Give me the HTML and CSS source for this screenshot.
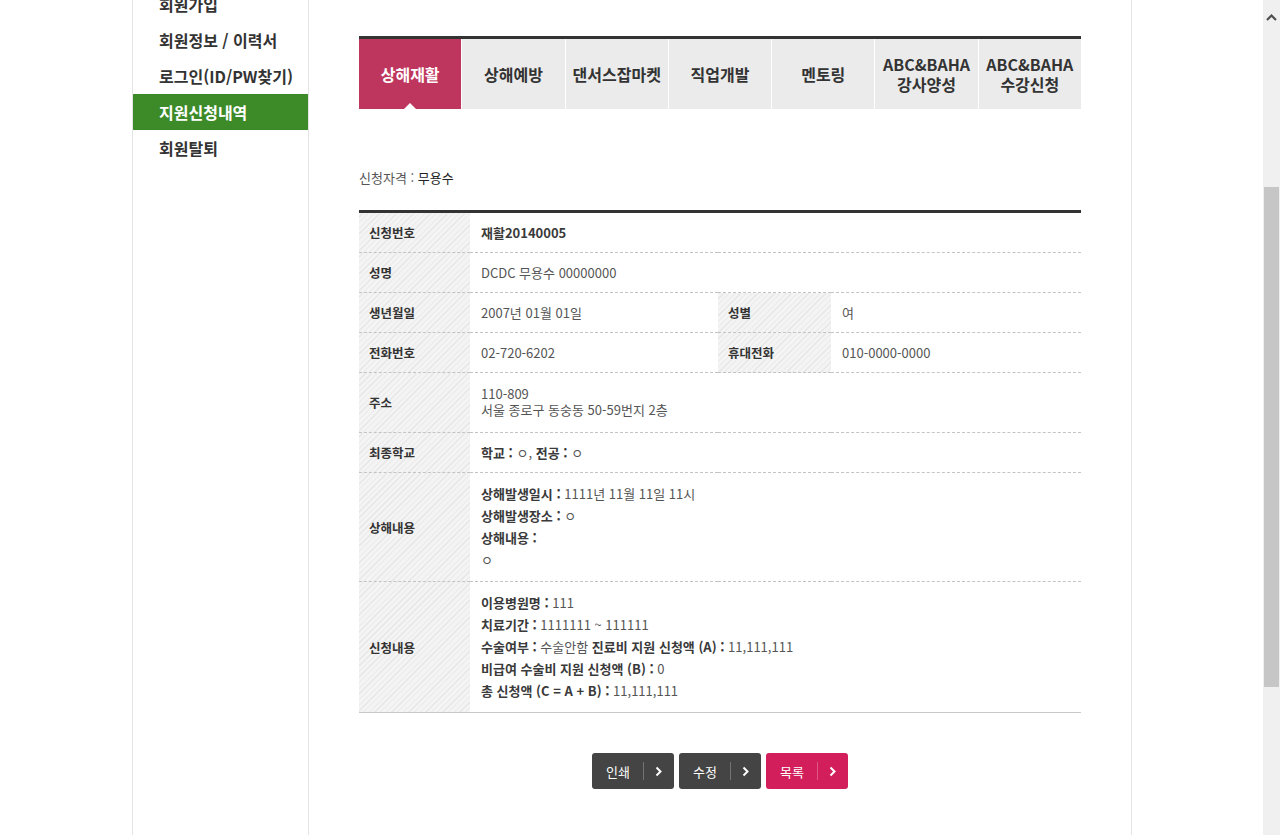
FILE: index.html
```html
<!DOCTYPE html>
<html lang="ko">
<head>
    <meta charset="UTF-8">
    <meta name="viewport" content="width=device-width, initial-scale=1.0">
    <title>마이페이지 - 지원신청내역</title>
    <link rel="stylesheet" href="styles.css">
</head>
<body>
<div class="viewport">
    <div class="page">
        <div class="wrap">
            <!-- Left menu -->
            <aside class="side">
                <ul class="side-menu">
                    <li><a href="#">회원가입</a></li>
                    <li><a href="#">회원정보 / 이력서</a></li>
                    <li><a href="#">로그인(ID/PW찾기)</a></li>
                    <li class="on"><a href="#">지원신청내역</a></li>
                    <li><a href="#">회원탈퇴</a></li>
                </ul>
            </aside>

            <main class="content">
                <!-- Program tabs -->
                <ul class="tabs">
                    <li class="on"><a href="#">상해재활</a></li>
                    <li><a href="#">상해예방</a></li>
                    <li><a href="#">댄서스잡마켓</a></li>
                    <li><a href="#">직업개발</a></li>
                    <li><a href="#">멘토링</a></li>
                    <li><a href="#">ABC&amp;BAHA<br>강사양성</a></li>
                    <li><a href="#">ABC&amp;BAHA<br>수강신청</a></li>
                </ul>

                <p class="qualify">신청자격 : <strong>무용수</strong></p>

                <!-- Application detail -->
                <table class="view-table">
                    <colgroup>
                        <col class="c-th">
                        <col class="c-td">
                        <col class="c-th2">
                        <col>
                    </colgroup>
                    <tr>
                        <th>신청번호</th>
                        <td colspan="3"><strong>재활20140005</strong></td>
                    </tr>
                    <tr>
                        <th>성명</th>
                        <td colspan="3">DCDC 무용수 00000000</td>
                    </tr>
                    <tr>
                        <th>생년월일</th>
                        <td>2007년 01월 01일</td>
                        <th>성별</th>
                        <td>여</td>
                    </tr>
                    <tr>
                        <th>전화번호</th>
                        <td>02-720-6202</td>
                        <th>휴대전화</th>
                        <td>010-0000-0000</td>
                    </tr>
                    <tr>
                        <th>주소</th>
                        <td colspan="3" class="addr">110-809<br>서울 종로구 동숭동 50-59번지 2층</td>
                    </tr>
                    <tr>
                        <th>최종학교</th>
                        <td colspan="3"><strong>학교 :</strong> ㅇ, <strong>전공 :</strong> ㅇ</td>
                    </tr>
                    <tr>
                        <th>상해내용</th>
                        <td colspan="3" class="multi">
                            <strong>상해발생일시 :</strong> 1111년 11월 11일 11시<br>
                            <strong>상해발생장소 :</strong> ㅇ<br>
                            <strong>상해내용 :</strong><br>
                            ㅇ
                        </td>
                    </tr>
                    <tr>
                        <th>신청내용</th>
                        <td colspan="3" class="multi">
                            <strong>이용병원명 :</strong> 111<br>
                            <strong>치료기간 :</strong> 1111111 ~ 111111<br>
                            <strong>수술여부 :</strong> 수술안함 <strong>진료비 지원 신청액 (A) :</strong> 11,111,111<br>
                            <strong>비급여 수술비 지원 신청액 (B) :</strong> 0<br>
                            <strong>총 신청액 (C = A + B) :</strong> 11,111,111
                        </td>
                    </tr>
                </table>

                <div class="btn-area">
                    <a href="#" class="btn">인쇄<span class="arr"><svg width="8" height="11" viewBox="0 0 8 11"><path d="M1.5 1.5l4 4-4 4" fill="none" stroke="#fff" stroke-width="2"/></svg></span></a>
                    <a href="#" class="btn">수정<span class="arr"><svg width="8" height="11" viewBox="0 0 8 11"><path d="M1.5 1.5l4 4-4 4" fill="none" stroke="#fff" stroke-width="2"/></svg></span></a>
                    <a href="#" class="btn pink">목록<span class="arr"><svg width="8" height="11" viewBox="0 0 8 11"><path d="M1.5 1.5l4 4-4 4" fill="none" stroke="#fff" stroke-width="2"/></svg></span></a>
                </div>
            </main>
        </div>
    </div>

    <!-- browser scrollbar as seen in the capture -->
    <div class="scrollbar">
        <span class="sb-up"><svg width="11" height="7" viewBox="0 0 11 7"><path d="M1 6l4.5-4.5L10 6" fill="none" stroke="#505050" stroke-width="2.2"/></svg></span>
        <span class="sb-thumb"></span>
    </div>
</div>
</body>
</html>
```

FILE: styles.css
```css
* {
    box-sizing: border-box;
}

body {
    margin: 0;
    padding: 0;
    font-family: "Noto Sans CJK KR", "Noto Sans", sans-serif;
    font-size: 13px;
    color: #555;
    background-color: #fff;
}

ul {
    margin: 0;
    padding: 0;
    list-style: none;
}

a {
    text-decoration: none;
    color: inherit;
}

.viewport {
    display: flex;
    height: 835px;
    overflow: hidden;
}

.page {
    flex: 1;
}

.wrap {
    display: flex;
    width: 1000px;
    min-height: 835px;
    margin: 0 0 0 132px;
    border-left: 1px solid #e4e4e4;
    border-right: 1px solid #e4e4e4;
}

/* Left menu */
.side {
    width: 176px;
    border-right: 1px solid #e4e4e4;
}

.side-menu {
    margin-top: -14px;
}

.side-menu li a {
    display: block;
    height: 36px;
    line-height: 36px;
    padding-left: 26px;
    font-size: 16px;
    font-weight: 700;
    color: #333;
}

.side-menu li.on a {
    background-color: #3d8b28;
    color: #fff;
}

/* Content */
.content {
    flex: 1;
    padding: 36px 50px 0 50px;
}

.tabs {
    display: flex;
    border-top: 3px solid #333;
}

.tabs li {
    position: relative;
    flex: 1;
    height: 70px;
    background-color: #ebebeb;
    border-left: 1px solid #fff;
}

.tabs li:first-child {
    border-left: none;
}

.tabs li a {
    display: flex;
    align-items: center;
    justify-content: center;
    height: 100%;
    text-align: center;
    font-size: 16px;
    font-weight: 700;
    line-height: 20px;
    color: #333;
}

.tabs li.on {
    background-color: #be355d;
}

.tabs li.on a {
    color: #fff;
}

.tabs li.on::after {
    content: "";
    position: absolute;
    left: 50%;
    bottom: 0;
    margin-left: -6px;
    border: 6px solid transparent;
    border-bottom-color: #fff;
    border-top: none;
}

.qualify {
    margin: 60px 0 0;
    line-height: 18px;
    font-size: 13px;
    color: #555;
}

.qualify strong {
    font-weight: 400;
    color: #222;
}

/* Detail table */
.view-table {
    width: 100%;
    margin-top: 23px;
    border-collapse: collapse;
    border-top: 3px solid #333;
    border-bottom: 1px solid #c8c8c8;
}

.view-table .c-th {
    width: 111px;
}

.view-table .c-td {
    width: 248px;
}

.view-table .c-th2 {
    width: 113px;
}

.view-table th,
.view-table td {
    padding: 10px 11px;
    line-height: 19px;
    text-align: left;
    vertical-align: middle;
    border-bottom: 1px dashed #c4c4c4;
}

.view-table tr:last-child th,
.view-table tr:last-child td {
    border-bottom: none;
}

.view-table th {
    padding-left: 10px;
    font-size: 12.5px;
    font-weight: 700;
    color: #333;
    background-color: #f4f4f4;
    background-image: repeating-linear-gradient(-45deg, #f4f4f4 0, #f4f4f4 3px, #e6e6e6 3px, #e6e6e6 4px);
}

.view-table td {
    color: #555;
}

.view-table td strong {
    font-weight: 700;
    color: #3a3a3a;
}

.view-table td.addr {
    padding-top: 13px;
    padding-bottom: 14px;
    line-height: 16px;
}

.view-table td.multi {
    line-height: 22px;
}

/* Buttons */
.btn-area {
    display: flex;
    justify-content: center;
    gap: 5px;
    margin-top: 40px;
}

.btn {
    display: flex;
    align-items: center;
    width: 82px;
    height: 36px;
    padding-left: 14px;
    border-radius: 3px;
    background-color: #444;
    color: #fff;
    font-size: 13px;
}

.btn.pink {
    background-color: #d21e5b;
}

.btn .arr {
    display: flex;
    align-items: center;
    justify-content: center;
    margin-left: auto;
    width: 31px;
    height: 18px;
    border-left: 1px solid rgba(255, 255, 255, 0.25);
}

/* Scrollbar */
.scrollbar {
    display: flex;
    flex-direction: column;
    align-items: center;
    width: 17px;
    background-color: #f0f0f0;
}

.sb-up {
    display: flex;
    align-items: center;
    justify-content: center;
    height: 34px;
}

.sb-thumb {
    width: 15px;
    height: 500px;
    margin-top: 153px;
    background-color: #c6c6c6;
}
```
